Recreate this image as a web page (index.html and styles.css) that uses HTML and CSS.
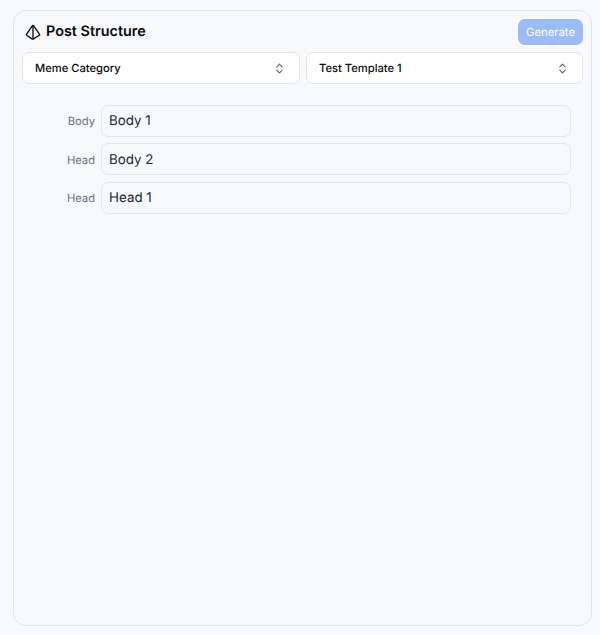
FILE: index.html
```html
<!DOCTYPE html>
<html lang="en">
<head>
<meta charset="utf-8">
<title>Post Structure</title>
<link rel="stylesheet" href="styles.css">
</head>
<body>
<main class="panel">
  <header class="panel-head">
    <h1 class="title">
      <svg class="title-icon" viewBox="0 0 24 24" width="16" height="16" fill="none" stroke="currentColor" stroke-width="2" stroke-linecap="round" stroke-linejoin="round"><path d="M2.5 16.88a1 1 0 0 1-.32-1.43l9-13.02a1 1 0 0 1 1.64 0l9 13.01a1 1 0 0 1-.33 1.44l-8.97 5.38a2 2 0 0 1-2.06 0z"/><path d="M12 2v20"/></svg>
      Post Structure
    </h1>
    <button class="generate">Generate</button>
  </header>
  <div class="selects">
    <div class="select"><span>Meme Category</span><svg viewBox="0 0 24 24" width="13" height="13" fill="none" stroke="currentColor" stroke-width="2" stroke-linecap="round" stroke-linejoin="round"><path d="m7 15 5 5 5-5"/><path d="m7 9 5-5 5 5"/></svg></div>
    <div class="select"><span>Test Template 1</span><svg viewBox="0 0 24 24" width="13" height="13" fill="none" stroke="currentColor" stroke-width="2" stroke-linecap="round" stroke-linejoin="round"><path d="m7 15 5 5 5-5"/><path d="m7 9 5-5 5 5"/></svg></div>
  </div>
  <div class="rows">
    <div class="row"><span class="label">Body</span><div class="field">Body 1</div></div>
    <div class="row"><span class="label">Head</span><div class="field">Body 2</div></div>
    <div class="row"><span class="label">Head</span><div class="field">Head 1</div></div>
  </div>
</main>
</body>
</html>
```
FILE: styles.css
```css
* { box-sizing: border-box; }
html, body { margin: 0; height: 100%; background: #f9fafc; }
body { padding: 10px 8px 9px 13px; font-family: Inter, sans-serif; text-rendering: geometricPrecision; }
.panel { height: 616px; background: #f8f9fb; border: 1px solid #e2e5ea; border-radius: 13px; padding: 8px 8px 0; }
.panel-head { display: flex; justify-content: space-between; align-items: center; height: 26px; margin-bottom: 7px; }
.title { display: flex; align-items: center; gap: 5px; margin: 0 0 1px 3px; font-size: 14.4px; font-weight: 600; color: #0a0a0a; }
.generate { width: 65px; height: 26px; border: 0; border-radius: 7px; background: #9bbcf6; color: #fff; font: 400 11.3px Inter, sans-serif; padding: 0; text-rendering: geometricPrecision; }
.selects { display: grid; grid-template-columns: 278px 277px; gap: 6px; }
.select { display: flex; justify-content: space-between; align-items: center; height: 32px; padding: 0 13px 1px 12px; background: #fff; border: 1px solid #e2e5ea; border-radius: 7px; font-size: 11.2px; font-weight: 500; color: #0a0a0a; }
.select svg { color: #5b6472; flex: none; margin-top: 1px; }
.rows { display: flex; flex-direction: column; gap: 6.4px; margin: 21px 12.5px 0 0; }
.row { display: flex; align-items: center; gap: 6px; }
.label { width: 73px; padding-top: 0.4px; text-align: right; font-size: 11.2px; color: #6b7280; }
.field { flex: 1; height: 32px; display: flex; align-items: center; padding: 0.6px 7px 0; border: 1px solid #e2e5ea; border-radius: 7px; font-size: 13.4px; color: #1e293b; }
```
